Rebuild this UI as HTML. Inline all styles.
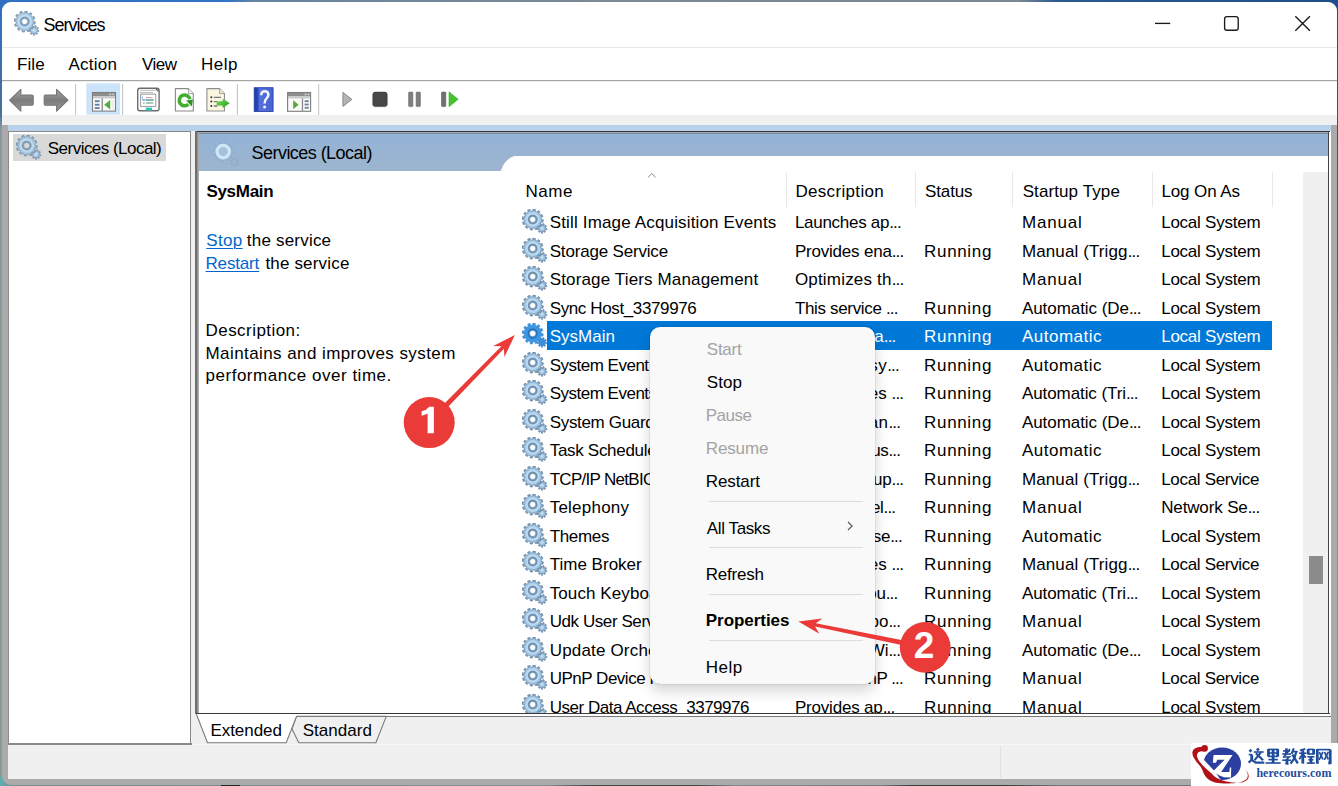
<!DOCTYPE html>
<html><head><meta charset="utf-8"><title>Services</title>
<style>
*{margin:0;padding:0;box-sizing:border-box}
html,body{width:1338px;height:786px;overflow:hidden}
body{position:relative;background:#ababab;font-family:"Liberation Sans",sans-serif;color:#000}
.a{position:absolute}
.t{position:absolute;white-space:pre;font-family:"Liberation Sans",sans-serif}
</style></head><body>
<!-- desktop edges -->
<div class="a" style="left:0;top:0;width:1338px;height:12px;background:linear-gradient(90deg,#2f70c4 0,#3374c6 17%,#66849f 19%,#7d8a96 45%,#7c8893 76%,#2b5a90 79%,#1d4f8c 100%)"></div>
<div class="a" style="left:0;top:0;width:10px;height:786px;background:linear-gradient(180deg,#2f70c4 0,#3f6fa8 10%,#4c6f98 14.5%,#8a9aa0 16.5%,#889c98 100%)"></div>
<div class="a" style="left:1330px;top:0;width:8px;height:786px;background:linear-gradient(180deg,#1d4f8c 0,#35557a 14%,#4a5f74 38%,#868e92 50%,#8a9092 100%)"></div>
<div class="a" style="left:0;top:776px;width:1338px;height:10px;background:linear-gradient(90deg,#5fb0b2 0,#7a8c8c 1.2%,#7f8e8e 41%,#454545 44%,#454545 52%,#7f8c8c 55%,#707a7a 66%,#3a3a3a 68%,#3a3a3a 75%,#6e7676 79%,#6e7676 100%)"></div><div class="a" style="left:220.5px;top:784.6px;width:19.5px;height:2px;background:#222"></div>
<!-- window -->
<div class="a" style="left:2px;top:2px;width:1335px;height:782.6px;background:#ababab;border-radius:9px 9px 9px 9px;overflow:hidden">
  <div class="a" style="left:0;top:0;width:1335px;height:113px;background:#fff"></div>
  <div class="a" style="left:0;top:45px;width:1335px;height:1px;background:#e9e9e9"></div>
  <div class="a" style="left:0;top:78.2px;width:1335px;height:1.2px;background:#a6a6a6"></div><div class="a" style="left:0;top:79.4px;width:1335px;height:1px;background:#ececec"></div>
  <div class="a" style="left:0;top:113px;width:1335px;height:10px;background:#f0f0f0"></div>
</div>
<!-- window controls -->
<svg class="a" style="left:1150px;top:10px" width="170" height="28" viewBox="1150 10 170 28" fill="none" stroke="#1b1b1b" stroke-width="1.35">
<path d="M1155 23.4 H1170.2"/>
<rect x="1224.6" y="16.6" width="13.6" height="13.6" rx="2.3"/>
<path d="M1295.3 16.2 L1309.9 30.8 M1309.9 16.2 L1295.3 30.8"/>
</svg>
<!-- client area -->
<div class="a" style="left:8px;top:125px;width:1323px;height:6px;background:#b9d1ea"></div>
<div class="a" style="left:8px;top:131px;width:1323px;height:648px;background:#f0f0f0"></div>
<!-- left tree panel -->
<div class="a" style="left:8px;top:130.5px;width:183px;height:614px;background:#fff;border:1.3px solid #8a8a8a"></div>
<div class="a" style="left:12.8px;top:134.2px;width:153.6px;height:26.4px;background:#d9d9d9"></div>
<!-- right panel -->
<div class="a" style="left:195px;top:131px;width:1134.5px;height:583px;background:#fff"></div>
<div class="a" style="left:198.5px;top:133.3px;width:1130px;height:37.7px;background:linear-gradient(180deg,#93b3d6,#98b4d2 50%,#9db4ce)"></div>
<svg class="a" style="left:498px;top:154px" width="834" height="20" viewBox="498 154 834 20"><path d="M500.3 171.3 L500.6 171.3 C503 166 505 159 514.5 156 L1328.5 156 L1328.5 172 L500.3 172 Z" fill="#fff"/></svg>
<svg class="a" style="left:208px;top:138px" width="36" height="32" viewBox="208 138 36 32"><circle cx="223.2" cy="151.6" r="6.2" fill="#a4c1dc" stroke="#cfe6f6" stroke-width="3.2"/><circle cx="223.2" cy="151.6" r="9.3" fill="none" stroke="#86a6c6" stroke-width="1.6" stroke-dasharray="2.2 2.67" opacity=".55"/><circle cx="234.5" cy="161.8" r="3.6" fill="none" stroke="#7f9fc2" stroke-width="1.5" stroke-dasharray="1.4 1.43" opacity=".7"/></svg>
<!-- right panel borders -->
<div class="a" style="left:195px;top:130.7px;width:1134.5px;height:1.4px;background:#30343a"></div>
<div class="a" style="left:197px;top:132.1px;width:1131.2px;height:1.3px;background:#a6a6a8"></div><div class="a" style="left:199px;top:133.3px;width:1129.2px;height:.8px;background:#7d8aa4"></div>
<div class="a" style="left:195px;top:130.7px;width:2px;height:583.4px;background:#6f6f6f"></div>
<div class="a" style="left:197px;top:132.1px;width:2.2px;height:580.6px;background:linear-gradient(90deg,#8a8a8a,#b4b4b4)"></div>
<div class="a" style="left:1328.2px;top:131px;width:1.3px;height:583px;background:#454545"></div>
<div class="a" style="left:1329.5px;top:131px;width:1.5px;height:586px;background:#fff"></div>
<!-- header separators -->
<div class="a" style="left:786px;top:172px;width:1px;height:35px;background:#e8e8e8"></div>
<div class="a" style="left:915px;top:172px;width:1px;height:35px;background:#e8e8e8"></div>
<div class="a" style="left:1012px;top:172px;width:1px;height:35px;background:#e8e8e8"></div>
<div class="a" style="left:1152px;top:172px;width:1px;height:35px;background:#e8e8e8"></div>
<div class="a" style="left:1272px;top:172px;width:1px;height:35px;background:#e8e8e8"></div>
<!-- sort arrow -->
<svg class="a" style="left:645px;top:170px" width="14" height="10" viewBox="0 0 14 10"><path d="M3 7.3 L6.8 3.6 L10.6 7.3" fill="none" stroke="#8a8a8a" stroke-width="1"/></svg>
<!-- scrollbar -->
<div class="a" style="left:1303.3px;top:171.6px;width:24.7px;height:541px;background:#f0f0f0"></div>
<div class="a" style="left:1308.7px;top:555.6px;width:14.2px;height:28.3px;background:#8b8b8b"></div>
<!-- selected row -->
<div class="a" style="left:546.8px;top:321.4px;width:725.4px;height:28.2px;background:#0078d7"></div>
<span class="t" style='left:43.50px;top:13.00px;font-size:18px;line-height:24px;letter-spacing:-1.017px;'>Services</span>
<span class="t" style='left:16.90px;top:53.20px;font-size:17px;line-height:23px;letter-spacing:0.154px;'>File</span>
<span class="t" style='left:68.40px;top:53.20px;font-size:17px;line-height:23px;letter-spacing:0.281px;'>Action</span>
<span class="t" style='left:141.90px;top:53.20px;font-size:17px;line-height:23px;letter-spacing:-0.454px;'>View</span>
<span class="t" style='left:201.10px;top:53.20px;font-size:17px;line-height:23px;letter-spacing:0.497px;'>Help</span>
<span class="t" style='left:47.80px;top:137.30px;font-size:17px;line-height:23px;letter-spacing:-0.527px;'>Services (Local)</span>
<span class="t" style='left:251.60px;top:141.40px;font-size:18px;line-height:24px;letter-spacing:-0.550px;'>Services (Local)</span>
<span class="t" style='left:206.40px;top:179.60px;font-size:17px;line-height:23px;letter-spacing:-0.281px;font-weight:700;'>SysMain</span>
<span class="t" style='left:206.30px;top:228.80px;font-size:17px;line-height:23px;letter-spacing:0.328px;color:#0066cc;text-decoration:underline;text-underline-offset:2px;text-decoration-thickness:1px;'>Stop</span>
<span class="t" style='left:246.80px;top:228.80px;font-size:17px;line-height:23px;letter-spacing:0.205px;'>the service</span>
<span class="t" style='left:205.50px;top:251.50px;font-size:17px;line-height:23px;letter-spacing:-0.162px;color:#0066cc;text-decoration:underline;text-underline-offset:2px;text-decoration-thickness:1px;'>Restart</span>
<span class="t" style='left:265.40px;top:251.50px;font-size:17px;line-height:23px;letter-spacing:0.175px;'>the service</span>
<span class="t" style='left:205.50px;top:318.80px;font-size:17px;line-height:23px;letter-spacing:0.452px;'>Description:</span>
<span class="t" style='left:205.50px;top:341.50px;font-size:17px;line-height:23px;letter-spacing:0.420px;'>Maintains and improves system</span>
<span class="t" style='left:205.50px;top:363.80px;font-size:17px;line-height:23px;letter-spacing:0.525px;'>performance over time.</span>
<span class="t" style='left:525.50px;top:179.50px;font-size:17px;line-height:23px;letter-spacing:0.569px;'>Name</span>
<span class="t" style='left:795.40px;top:179.50px;font-size:17px;line-height:23px;letter-spacing:0.332px;'>Description</span>
<span class="t" style='left:925.00px;top:179.50px;font-size:17px;line-height:23px;letter-spacing:-0.119px;'>Status</span>
<span class="t" style='left:1022.70px;top:179.50px;font-size:17px;line-height:23px;letter-spacing:0.097px;'>Startup Type</span>
<span class="t" style='left:1161.40px;top:179.50px;font-size:17px;line-height:23px;letter-spacing:-0.091px;'>Log On As</span>
<span class="t" style='left:549.70px;top:211.00px;font-size:17px;line-height:23px;letter-spacing:0.159px;'>Still Image Acquisition Events</span>
<span class="t" style='left:794.90px;top:211.00px;font-size:17px;line-height:23px;letter-spacing:-0.282px;'>Launches ap<span style="letter-spacing:-0.85px">...</span></span>
<span class="t" style='left:1021.90px;top:211.00px;font-size:17px;line-height:23px;letter-spacing:0.824px;'>Manual</span>
<span class="t" style='left:1161.20px;top:211.00px;font-size:17px;line-height:23px;letter-spacing:-0.244px;'>Local System</span>
<span class="t" style='left:549.70px;top:239.50px;font-size:17px;line-height:23px;letter-spacing:-0.178px;'>Storage Service</span>
<span class="t" style='left:794.90px;top:239.50px;font-size:17px;line-height:23px;letter-spacing:-0.206px;'>Provides ena<span style="letter-spacing:-0.85px">...</span></span>
<span class="t" style='left:924.10px;top:239.50px;font-size:17px;line-height:23px;letter-spacing:0.655px;'>Running</span>
<span class="t" style='left:1021.90px;top:239.50px;font-size:17px;line-height:23px;letter-spacing:0.116px;'>Manual (Trigg<span style="letter-spacing:-0.85px">...</span></span>
<span class="t" style='left:1161.20px;top:239.50px;font-size:17px;line-height:23px;letter-spacing:-0.244px;'>Local System</span>
<span class="t" style='left:549.70px;top:268.00px;font-size:17px;line-height:23px;letter-spacing:0.146px;'>Storage Tiers Management</span>
<span class="t" style='left:794.90px;top:268.00px;font-size:17px;line-height:23px;letter-spacing:0.190px;'>Optimizes th<span style="letter-spacing:-0.85px">...</span></span>
<span class="t" style='left:1021.90px;top:268.00px;font-size:17px;line-height:23px;letter-spacing:0.824px;'>Manual</span>
<span class="t" style='left:1161.20px;top:268.00px;font-size:17px;line-height:23px;letter-spacing:-0.244px;'>Local System</span>
<span class="t" style='left:549.70px;top:296.50px;font-size:17px;line-height:23px;letter-spacing:-0.378px;'>Sync Host_3379976</span>
<span class="t" style='left:794.90px;top:296.50px;font-size:17px;line-height:23px;letter-spacing:-0.335px;'>This service <span style="letter-spacing:-0.85px">...</span></span>
<span class="t" style='left:924.10px;top:296.50px;font-size:17px;line-height:23px;letter-spacing:0.655px;'>Running</span>
<span class="t" style='left:1021.90px;top:296.50px;font-size:17px;line-height:23px;letter-spacing:-0.050px;'>Automatic (De<span style="letter-spacing:-0.85px">...</span></span>
<span class="t" style='left:1161.20px;top:296.50px;font-size:17px;line-height:23px;letter-spacing:-0.244px;'>Local System</span>
<span class="t" style='left:549.70px;top:325.00px;font-size:17px;line-height:23px;letter-spacing:0.011px;color:#fff;'>SysMain</span>
<span class="t" style='left:794.90px;top:325.00px;font-size:17px;line-height:23px;letter-spacing:0.184px;color:#fff;'>Maintains a<span style="letter-spacing:-0.85px">...</span></span>
<span class="t" style='left:924.10px;top:325.00px;font-size:17px;line-height:23px;letter-spacing:0.655px;color:#fff;'>Running</span>
<span class="t" style='left:1021.90px;top:325.00px;font-size:17px;line-height:23px;letter-spacing:0.514px;color:#fff;'>Automatic</span>
<span class="t" style='left:1161.20px;top:325.00px;font-size:17px;line-height:23px;letter-spacing:-0.244px;color:#fff;'>Local System</span>
<span class="t" style='left:549.70px;top:353.50px;font-size:17px;line-height:23px;letter-spacing:-0.499px;'>System Event Notif</span>
<span class="t" style='left:794.90px;top:353.50px;font-size:17px;line-height:23px;letter-spacing:0.491px;'>Monitors sy<span style="letter-spacing:-0.85px">...</span></span>
<span class="t" style='left:924.10px;top:353.50px;font-size:17px;line-height:23px;letter-spacing:0.655px;'>Running</span>
<span class="t" style='left:1021.90px;top:353.50px;font-size:17px;line-height:23px;letter-spacing:0.514px;'>Automatic</span>
<span class="t" style='left:1161.20px;top:353.50px;font-size:17px;line-height:23px;letter-spacing:-0.244px;'>Local System</span>
<span class="t" style='left:549.70px;top:382.00px;font-size:17px;line-height:23px;letter-spacing:-0.499px;'>System Events Brok</span>
<span class="t" style='left:794.90px;top:382.00px;font-size:17px;line-height:23px;letter-spacing:0.022px;'>Coordinates <span style="letter-spacing:-0.85px">...</span></span>
<span class="t" style='left:924.10px;top:382.00px;font-size:17px;line-height:23px;letter-spacing:0.655px;'>Running</span>
<span class="t" style='left:1021.90px;top:382.00px;font-size:17px;line-height:23px;letter-spacing:-0.079px;'>Automatic (Tri<span style="letter-spacing:-0.85px">...</span></span>
<span class="t" style='left:1161.20px;top:382.00px;font-size:17px;line-height:23px;letter-spacing:-0.244px;'>Local System</span>
<span class="t" style='left:549.70px;top:410.50px;font-size:17px;line-height:23px;letter-spacing:-0.323px;'>System Guard Runt</span>
<span class="t" style='left:794.90px;top:410.50px;font-size:17px;line-height:23px;letter-spacing:0.430px;'>Monitors an<span style="letter-spacing:-0.85px">...</span></span>
<span class="t" style='left:924.10px;top:410.50px;font-size:17px;line-height:23px;letter-spacing:0.655px;'>Running</span>
<span class="t" style='left:1021.90px;top:410.50px;font-size:17px;line-height:23px;letter-spacing:-0.050px;'>Automatic (De<span style="letter-spacing:-0.85px">...</span></span>
<span class="t" style='left:1161.20px;top:410.50px;font-size:17px;line-height:23px;letter-spacing:-0.244px;'>Local System</span>
<span class="t" style='left:549.70px;top:439.00px;font-size:17px;line-height:23px;letter-spacing:-0.303px;'>Task Scheduler</span>
<span class="t" style='left:794.90px;top:439.00px;font-size:17px;line-height:23px;letter-spacing:-0.395px;'>Enables a us<span style="letter-spacing:-0.85px">...</span></span>
<span class="t" style='left:924.10px;top:439.00px;font-size:17px;line-height:23px;letter-spacing:0.655px;'>Running</span>
<span class="t" style='left:1021.90px;top:439.00px;font-size:17px;line-height:23px;letter-spacing:0.514px;'>Automatic</span>
<span class="t" style='left:1161.20px;top:439.00px;font-size:17px;line-height:23px;letter-spacing:-0.244px;'>Local System</span>
<span class="t" style='left:549.70px;top:467.50px;font-size:17px;line-height:23px;letter-spacing:-0.709px;'>TCP/IP NetBIOS Helper</span>
<span class="t" style='left:794.90px;top:467.50px;font-size:17px;line-height:23px;letter-spacing:-0.135px;'>Provides sup<span style="letter-spacing:-0.85px">...</span></span>
<span class="t" style='left:924.10px;top:467.50px;font-size:17px;line-height:23px;letter-spacing:0.655px;'>Running</span>
<span class="t" style='left:1021.90px;top:467.50px;font-size:17px;line-height:23px;letter-spacing:0.116px;'>Manual (Trigg<span style="letter-spacing:-0.85px">...</span></span>
<span class="t" style='left:1161.20px;top:467.50px;font-size:17px;line-height:23px;letter-spacing:-0.316px;'>Local Service</span>
<span class="t" style='left:549.70px;top:496.00px;font-size:17px;line-height:23px;letter-spacing:0.224px;'>Telephony</span>
<span class="t" style='left:794.90px;top:496.00px;font-size:17px;line-height:23px;letter-spacing:-0.303px;'>Provides Tel<span style="letter-spacing:-0.85px">...</span></span>
<span class="t" style='left:924.10px;top:496.00px;font-size:17px;line-height:23px;letter-spacing:0.655px;'>Running</span>
<span class="t" style='left:1021.90px;top:496.00px;font-size:17px;line-height:23px;letter-spacing:0.824px;'>Manual</span>
<span class="t" style='left:1161.20px;top:496.00px;font-size:17px;line-height:23px;letter-spacing:-0.141px;'>Network Se<span style="letter-spacing:-0.85px">...</span></span>
<span class="t" style='left:549.70px;top:524.50px;font-size:17px;line-height:23px;letter-spacing:-0.342px;'>Themes</span>
<span class="t" style='left:794.90px;top:524.50px;font-size:17px;line-height:23px;letter-spacing:-0.243px;'>Provides use<span style="letter-spacing:-0.85px">...</span></span>
<span class="t" style='left:924.10px;top:524.50px;font-size:17px;line-height:23px;letter-spacing:0.655px;'>Running</span>
<span class="t" style='left:1021.90px;top:524.50px;font-size:17px;line-height:23px;letter-spacing:0.514px;'>Automatic</span>
<span class="t" style='left:1161.20px;top:524.50px;font-size:17px;line-height:23px;letter-spacing:-0.244px;'>Local System</span>
<span class="t" style='left:549.70px;top:553.00px;font-size:17px;line-height:23px;letter-spacing:0.012px;'>Time Broker</span>
<span class="t" style='left:794.90px;top:553.00px;font-size:17px;line-height:23px;letter-spacing:0.022px;'>Coordinates <span style="letter-spacing:-0.85px">...</span></span>
<span class="t" style='left:924.10px;top:553.00px;font-size:17px;line-height:23px;letter-spacing:0.655px;'>Running</span>
<span class="t" style='left:1021.90px;top:553.00px;font-size:17px;line-height:23px;letter-spacing:0.116px;'>Manual (Trigg<span style="letter-spacing:-0.85px">...</span></span>
<span class="t" style='left:1161.20px;top:553.00px;font-size:17px;line-height:23px;letter-spacing:-0.316px;'>Local Service</span>
<span class="t" style='left:549.70px;top:581.50px;font-size:17px;line-height:23px;letter-spacing:0.097px;'>Touch Keyboard and</span>
<span class="t" style='left:794.90px;top:581.50px;font-size:17px;line-height:23px;letter-spacing:-0.228px;'>Enables Tou<span style="letter-spacing:-0.85px">...</span></span>
<span class="t" style='left:924.10px;top:581.50px;font-size:17px;line-height:23px;letter-spacing:0.655px;'>Running</span>
<span class="t" style='left:1021.90px;top:581.50px;font-size:17px;line-height:23px;letter-spacing:-0.079px;'>Automatic (Tri<span style="letter-spacing:-0.85px">...</span></span>
<span class="t" style='left:1161.20px;top:581.50px;font-size:17px;line-height:23px;letter-spacing:-0.244px;'>Local System</span>
<span class="t" style='left:549.70px;top:610.00px;font-size:17px;line-height:23px;letter-spacing:-0.424px;'>Udk User Service_33</span>
<span class="t" style='left:794.90px;top:610.00px;font-size:17px;line-height:23px;'>Shell compo<span style="letter-spacing:-0.85px">...</span></span>
<span class="t" style='left:924.10px;top:610.00px;font-size:17px;line-height:23px;letter-spacing:0.655px;'>Running</span>
<span class="t" style='left:1021.90px;top:610.00px;font-size:17px;line-height:23px;letter-spacing:0.824px;'>Manual</span>
<span class="t" style='left:1161.20px;top:610.00px;font-size:17px;line-height:23px;letter-spacing:-0.244px;'>Local System</span>
<span class="t" style='left:549.70px;top:638.50px;font-size:17px;line-height:23px;letter-spacing:0.177px;'>Update Orchestrator</span>
<span class="t" style='left:794.90px;top:638.50px;font-size:17px;line-height:23px;letter-spacing:-0.093px;'>Manages Wi<span style="letter-spacing:-0.85px">...</span></span>
<span class="t" style='left:924.10px;top:638.50px;font-size:17px;line-height:23px;letter-spacing:0.655px;'>Running</span>
<span class="t" style='left:1021.90px;top:638.50px;font-size:17px;line-height:23px;letter-spacing:-0.050px;'>Automatic (De<span style="letter-spacing:-0.85px">...</span></span>
<span class="t" style='left:1161.20px;top:638.50px;font-size:17px;line-height:23px;letter-spacing:-0.244px;'>Local System</span>
<span class="t" style='left:549.70px;top:667.00px;font-size:17px;line-height:23px;letter-spacing:-0.484px;'>UPnP Device Host</span>
<span class="t" style='left:794.90px;top:667.00px;font-size:17px;line-height:23px;letter-spacing:-0.527px;'>Allows UPnP <span style="letter-spacing:-0.85px">...</span></span>
<span class="t" style='left:924.10px;top:667.00px;font-size:17px;line-height:23px;letter-spacing:0.655px;'>Running</span>
<span class="t" style='left:1021.90px;top:667.00px;font-size:17px;line-height:23px;letter-spacing:0.824px;'>Manual</span>
<span class="t" style='left:1161.20px;top:667.00px;font-size:17px;line-height:23px;letter-spacing:-0.316px;'>Local Service</span>
<span class="t" style='left:549.70px;top:695.50px;font-size:17px;line-height:23px;letter-spacing:-0.475px;'>User Data Access_3379976</span>
<span class="t" style='left:794.90px;top:695.50px;font-size:17px;line-height:23px;letter-spacing:-0.184px;'>Provides ap<span style="letter-spacing:-0.85px">...</span></span>
<span class="t" style='left:924.10px;top:695.50px;font-size:17px;line-height:23px;letter-spacing:0.655px;'>Running</span>
<span class="t" style='left:1021.90px;top:695.50px;font-size:17px;line-height:23px;letter-spacing:0.824px;'>Manual</span>
<span class="t" style='left:1161.20px;top:695.50px;font-size:17px;line-height:23px;letter-spacing:-0.244px;'>Local System</span>
<svg width="0" height="0" style="position:absolute"><defs>
<radialGradient id="gg" cx="10.7" cy="10.5" r="10.5" gradientUnits="userSpaceOnUse"><stop offset="0" stop-color="#6a8db0"/><stop offset=".42" stop-color="#6f93b6"/><stop offset=".52" stop-color="#c4e0f5"/><stop offset=".78" stop-color="#9cc1e0"/><stop offset="1" stop-color="#6a8aaa"/></radialGradient>
<radialGradient id="gs" cx="20" cy="19.3" r="4.8" gradientUnits="userSpaceOnUse"><stop offset="0" stop-color="#cfe8f9"/><stop offset=".5" stop-color="#9dc1df"/><stop offset="1" stop-color="#6d8eae"/></radialGradient>
</defs></svg>
<svg class="a" style="left:522px;top:209.0px" width="26" height="26" viewBox="0 0 26 26"><path d="M23.5 19.2 L24.9 19.5 L24.7 20.8 L23.2 20.6 L22.8 21.5 L23.6 22.6 L22.6 23.4 L21.6 22.4 L20.7 22.7 L20.7 24.2 L19.3 24.2 L19.3 22.7 L18.4 22.4 L17.4 23.4 L16.4 22.6 L17.2 21.5 L16.8 20.6 L15.3 20.8 L15.1 19.5 L16.5 19.2 L16.7 18.2 L15.5 17.4 L16.1 16.3 L17.4 17.0 L18.1 16.3 L17.7 15.0 L19.0 14.5 L19.5 15.8 L20.5 15.8 L21.0 14.5 L22.3 15.0 L21.9 16.3 L22.6 17.0 L23.9 16.3 L24.5 17.4 L23.3 18.2 Z" fill="url(#gs)" stroke="#6582a0" stroke-width=".7"/><path d="M19.2 10.3 L21.3 10.8 L21.0 13.2 L18.8 13.0 L18.2 14.6 L19.7 16.0 L18.3 17.9 L16.5 16.7 L15.1 17.8 L15.8 19.8 L13.5 20.7 L12.6 18.8 L10.9 19.0 L10.4 21.1 L8.0 20.8 L8.2 18.6 L6.6 18.0 L5.2 19.5 L3.3 18.1 L4.5 16.3 L3.4 14.9 L1.4 15.6 L0.5 13.3 L2.4 12.4 L2.2 10.7 L0.1 10.2 L0.4 7.8 L2.6 8.0 L3.2 6.4 L1.7 5.0 L3.1 3.1 L4.9 4.3 L6.3 3.2 L5.6 1.2 L7.9 0.3 L8.8 2.2 L10.5 2.0 L11.0 -0.1 L13.4 0.2 L13.2 2.4 L14.8 3.0 L16.2 1.5 L18.1 2.9 L16.9 4.7 L18.0 6.1 L20.0 5.4 L20.9 7.7 L19.0 8.6 Z M7.60 10.50 a3.10 3.10 0 1 0 6.20 0 a3.10 3.10 0 1 0 -6.20 0 Z" fill="url(#gg)" fill-rule="evenodd" stroke="#6886a4" stroke-width=".7"/></svg>
<svg class="a" style="left:522px;top:237.5px" width="26" height="26" viewBox="0 0 26 26"><path d="M23.5 19.2 L24.9 19.5 L24.7 20.8 L23.2 20.6 L22.8 21.5 L23.6 22.6 L22.6 23.4 L21.6 22.4 L20.7 22.7 L20.7 24.2 L19.3 24.2 L19.3 22.7 L18.4 22.4 L17.4 23.4 L16.4 22.6 L17.2 21.5 L16.8 20.6 L15.3 20.8 L15.1 19.5 L16.5 19.2 L16.7 18.2 L15.5 17.4 L16.1 16.3 L17.4 17.0 L18.1 16.3 L17.7 15.0 L19.0 14.5 L19.5 15.8 L20.5 15.8 L21.0 14.5 L22.3 15.0 L21.9 16.3 L22.6 17.0 L23.9 16.3 L24.5 17.4 L23.3 18.2 Z" fill="url(#gs)" stroke="#6582a0" stroke-width=".7"/><path d="M19.2 10.3 L21.3 10.8 L21.0 13.2 L18.8 13.0 L18.2 14.6 L19.7 16.0 L18.3 17.9 L16.5 16.7 L15.1 17.8 L15.8 19.8 L13.5 20.7 L12.6 18.8 L10.9 19.0 L10.4 21.1 L8.0 20.8 L8.2 18.6 L6.6 18.0 L5.2 19.5 L3.3 18.1 L4.5 16.3 L3.4 14.9 L1.4 15.6 L0.5 13.3 L2.4 12.4 L2.2 10.7 L0.1 10.2 L0.4 7.8 L2.6 8.0 L3.2 6.4 L1.7 5.0 L3.1 3.1 L4.9 4.3 L6.3 3.2 L5.6 1.2 L7.9 0.3 L8.8 2.2 L10.5 2.0 L11.0 -0.1 L13.4 0.2 L13.2 2.4 L14.8 3.0 L16.2 1.5 L18.1 2.9 L16.9 4.7 L18.0 6.1 L20.0 5.4 L20.9 7.7 L19.0 8.6 Z M7.60 10.50 a3.10 3.10 0 1 0 6.20 0 a3.10 3.10 0 1 0 -6.20 0 Z" fill="url(#gg)" fill-rule="evenodd" stroke="#6886a4" stroke-width=".7"/></svg>
<svg class="a" style="left:522px;top:266.0px" width="26" height="26" viewBox="0 0 26 26"><path d="M23.5 19.2 L24.9 19.5 L24.7 20.8 L23.2 20.6 L22.8 21.5 L23.6 22.6 L22.6 23.4 L21.6 22.4 L20.7 22.7 L20.7 24.2 L19.3 24.2 L19.3 22.7 L18.4 22.4 L17.4 23.4 L16.4 22.6 L17.2 21.5 L16.8 20.6 L15.3 20.8 L15.1 19.5 L16.5 19.2 L16.7 18.2 L15.5 17.4 L16.1 16.3 L17.4 17.0 L18.1 16.3 L17.7 15.0 L19.0 14.5 L19.5 15.8 L20.5 15.8 L21.0 14.5 L22.3 15.0 L21.9 16.3 L22.6 17.0 L23.9 16.3 L24.5 17.4 L23.3 18.2 Z" fill="url(#gs)" stroke="#6582a0" stroke-width=".7"/><path d="M19.2 10.3 L21.3 10.8 L21.0 13.2 L18.8 13.0 L18.2 14.6 L19.7 16.0 L18.3 17.9 L16.5 16.7 L15.1 17.8 L15.8 19.8 L13.5 20.7 L12.6 18.8 L10.9 19.0 L10.4 21.1 L8.0 20.8 L8.2 18.6 L6.6 18.0 L5.2 19.5 L3.3 18.1 L4.5 16.3 L3.4 14.9 L1.4 15.6 L0.5 13.3 L2.4 12.4 L2.2 10.7 L0.1 10.2 L0.4 7.8 L2.6 8.0 L3.2 6.4 L1.7 5.0 L3.1 3.1 L4.9 4.3 L6.3 3.2 L5.6 1.2 L7.9 0.3 L8.8 2.2 L10.5 2.0 L11.0 -0.1 L13.4 0.2 L13.2 2.4 L14.8 3.0 L16.2 1.5 L18.1 2.9 L16.9 4.7 L18.0 6.1 L20.0 5.4 L20.9 7.7 L19.0 8.6 Z M7.60 10.50 a3.10 3.10 0 1 0 6.20 0 a3.10 3.10 0 1 0 -6.20 0 Z" fill="url(#gg)" fill-rule="evenodd" stroke="#6886a4" stroke-width=".7"/></svg>
<svg class="a" style="left:522px;top:294.5px" width="26" height="26" viewBox="0 0 26 26"><path d="M23.5 19.2 L24.9 19.5 L24.7 20.8 L23.2 20.6 L22.8 21.5 L23.6 22.6 L22.6 23.4 L21.6 22.4 L20.7 22.7 L20.7 24.2 L19.3 24.2 L19.3 22.7 L18.4 22.4 L17.4 23.4 L16.4 22.6 L17.2 21.5 L16.8 20.6 L15.3 20.8 L15.1 19.5 L16.5 19.2 L16.7 18.2 L15.5 17.4 L16.1 16.3 L17.4 17.0 L18.1 16.3 L17.7 15.0 L19.0 14.5 L19.5 15.8 L20.5 15.8 L21.0 14.5 L22.3 15.0 L21.9 16.3 L22.6 17.0 L23.9 16.3 L24.5 17.4 L23.3 18.2 Z" fill="url(#gs)" stroke="#6582a0" stroke-width=".7"/><path d="M19.2 10.3 L21.3 10.8 L21.0 13.2 L18.8 13.0 L18.2 14.6 L19.7 16.0 L18.3 17.9 L16.5 16.7 L15.1 17.8 L15.8 19.8 L13.5 20.7 L12.6 18.8 L10.9 19.0 L10.4 21.1 L8.0 20.8 L8.2 18.6 L6.6 18.0 L5.2 19.5 L3.3 18.1 L4.5 16.3 L3.4 14.9 L1.4 15.6 L0.5 13.3 L2.4 12.4 L2.2 10.7 L0.1 10.2 L0.4 7.8 L2.6 8.0 L3.2 6.4 L1.7 5.0 L3.1 3.1 L4.9 4.3 L6.3 3.2 L5.6 1.2 L7.9 0.3 L8.8 2.2 L10.5 2.0 L11.0 -0.1 L13.4 0.2 L13.2 2.4 L14.8 3.0 L16.2 1.5 L18.1 2.9 L16.9 4.7 L18.0 6.1 L20.0 5.4 L20.9 7.7 L19.0 8.6 Z M7.60 10.50 a3.10 3.10 0 1 0 6.20 0 a3.10 3.10 0 1 0 -6.20 0 Z" fill="url(#gg)" fill-rule="evenodd" stroke="#6886a4" stroke-width=".7"/></svg>
<svg class="a" style="left:522px;top:323.0px" width="26" height="26" viewBox="0 0 26 26"><path d="M23.5 19.2 L24.9 19.5 L24.7 20.8 L23.2 20.6 L22.8 21.5 L23.6 22.6 L22.6 23.4 L21.6 22.4 L20.7 22.7 L20.7 24.2 L19.3 24.2 L19.3 22.7 L18.4 22.4 L17.4 23.4 L16.4 22.6 L17.2 21.5 L16.8 20.6 L15.3 20.8 L15.1 19.5 L16.5 19.2 L16.7 18.2 L15.5 17.4 L16.1 16.3 L17.4 17.0 L18.1 16.3 L17.7 15.0 L19.0 14.5 L19.5 15.8 L20.5 15.8 L21.0 14.5 L22.3 15.0 L21.9 16.3 L22.6 17.0 L23.9 16.3 L24.5 17.4 L23.3 18.2 Z" fill="#3d8fd8" stroke="#2c7bc4" stroke-width=".5"/><path d="M19.2 10.3 L21.3 10.8 L21.0 13.2 L18.8 13.0 L18.2 14.6 L19.7 16.0 L18.3 17.9 L16.5 16.7 L15.1 17.8 L15.8 19.8 L13.5 20.7 L12.6 18.8 L10.9 19.0 L10.4 21.1 L8.0 20.8 L8.2 18.6 L6.6 18.0 L5.2 19.5 L3.3 18.1 L4.5 16.3 L3.4 14.9 L1.4 15.6 L0.5 13.3 L2.4 12.4 L2.2 10.7 L0.1 10.2 L0.4 7.8 L2.6 8.0 L3.2 6.4 L1.7 5.0 L3.1 3.1 L4.9 4.3 L6.3 3.2 L5.6 1.2 L7.9 0.3 L8.8 2.2 L10.5 2.0 L11.0 -0.1 L13.4 0.2 L13.2 2.4 L14.8 3.0 L16.2 1.5 L18.1 2.9 L16.9 4.7 L18.0 6.1 L20.0 5.4 L20.9 7.7 L19.0 8.6 Z M7.60 10.50 a3.10 3.10 0 1 0 6.20 0 a3.10 3.10 0 1 0 -6.20 0 Z" fill="#3f97e3" fill-rule="evenodd" stroke="#2f80cc" stroke-width=".5"/><circle cx="10.7" cy="10.5" r="4.4" fill="none" stroke="#2a74ba" stroke-width="1.6"/></svg>
<svg class="a" style="left:522px;top:351.5px" width="26" height="26" viewBox="0 0 26 26"><path d="M23.5 19.2 L24.9 19.5 L24.7 20.8 L23.2 20.6 L22.8 21.5 L23.6 22.6 L22.6 23.4 L21.6 22.4 L20.7 22.7 L20.7 24.2 L19.3 24.2 L19.3 22.7 L18.4 22.4 L17.4 23.4 L16.4 22.6 L17.2 21.5 L16.8 20.6 L15.3 20.8 L15.1 19.5 L16.5 19.2 L16.7 18.2 L15.5 17.4 L16.1 16.3 L17.4 17.0 L18.1 16.3 L17.7 15.0 L19.0 14.5 L19.5 15.8 L20.5 15.8 L21.0 14.5 L22.3 15.0 L21.9 16.3 L22.6 17.0 L23.9 16.3 L24.5 17.4 L23.3 18.2 Z" fill="url(#gs)" stroke="#6582a0" stroke-width=".7"/><path d="M19.2 10.3 L21.3 10.8 L21.0 13.2 L18.8 13.0 L18.2 14.6 L19.7 16.0 L18.3 17.9 L16.5 16.7 L15.1 17.8 L15.8 19.8 L13.5 20.7 L12.6 18.8 L10.9 19.0 L10.4 21.1 L8.0 20.8 L8.2 18.6 L6.6 18.0 L5.2 19.5 L3.3 18.1 L4.5 16.3 L3.4 14.9 L1.4 15.6 L0.5 13.3 L2.4 12.4 L2.2 10.7 L0.1 10.2 L0.4 7.8 L2.6 8.0 L3.2 6.4 L1.7 5.0 L3.1 3.1 L4.9 4.3 L6.3 3.2 L5.6 1.2 L7.9 0.3 L8.8 2.2 L10.5 2.0 L11.0 -0.1 L13.4 0.2 L13.2 2.4 L14.8 3.0 L16.2 1.5 L18.1 2.9 L16.9 4.7 L18.0 6.1 L20.0 5.4 L20.9 7.7 L19.0 8.6 Z M7.60 10.50 a3.10 3.10 0 1 0 6.20 0 a3.10 3.10 0 1 0 -6.20 0 Z" fill="url(#gg)" fill-rule="evenodd" stroke="#6886a4" stroke-width=".7"/></svg>
<svg class="a" style="left:522px;top:380.0px" width="26" height="26" viewBox="0 0 26 26"><path d="M23.5 19.2 L24.9 19.5 L24.7 20.8 L23.2 20.6 L22.8 21.5 L23.6 22.6 L22.6 23.4 L21.6 22.4 L20.7 22.7 L20.7 24.2 L19.3 24.2 L19.3 22.7 L18.4 22.4 L17.4 23.4 L16.4 22.6 L17.2 21.5 L16.8 20.6 L15.3 20.8 L15.1 19.5 L16.5 19.2 L16.7 18.2 L15.5 17.4 L16.1 16.3 L17.4 17.0 L18.1 16.3 L17.7 15.0 L19.0 14.5 L19.5 15.8 L20.5 15.8 L21.0 14.5 L22.3 15.0 L21.9 16.3 L22.6 17.0 L23.9 16.3 L24.5 17.4 L23.3 18.2 Z" fill="url(#gs)" stroke="#6582a0" stroke-width=".7"/><path d="M19.2 10.3 L21.3 10.8 L21.0 13.2 L18.8 13.0 L18.2 14.6 L19.7 16.0 L18.3 17.9 L16.5 16.7 L15.1 17.8 L15.8 19.8 L13.5 20.7 L12.6 18.8 L10.9 19.0 L10.4 21.1 L8.0 20.8 L8.2 18.6 L6.6 18.0 L5.2 19.5 L3.3 18.1 L4.5 16.3 L3.4 14.9 L1.4 15.6 L0.5 13.3 L2.4 12.4 L2.2 10.7 L0.1 10.2 L0.4 7.8 L2.6 8.0 L3.2 6.4 L1.7 5.0 L3.1 3.1 L4.9 4.3 L6.3 3.2 L5.6 1.2 L7.9 0.3 L8.8 2.2 L10.5 2.0 L11.0 -0.1 L13.4 0.2 L13.2 2.4 L14.8 3.0 L16.2 1.5 L18.1 2.9 L16.9 4.7 L18.0 6.1 L20.0 5.4 L20.9 7.7 L19.0 8.6 Z M7.60 10.50 a3.10 3.10 0 1 0 6.20 0 a3.10 3.10 0 1 0 -6.20 0 Z" fill="url(#gg)" fill-rule="evenodd" stroke="#6886a4" stroke-width=".7"/></svg>
<svg class="a" style="left:522px;top:408.5px" width="26" height="26" viewBox="0 0 26 26"><path d="M23.5 19.2 L24.9 19.5 L24.7 20.8 L23.2 20.6 L22.8 21.5 L23.6 22.6 L22.6 23.4 L21.6 22.4 L20.7 22.7 L20.7 24.2 L19.3 24.2 L19.3 22.7 L18.4 22.4 L17.4 23.4 L16.4 22.6 L17.2 21.5 L16.8 20.6 L15.3 20.8 L15.1 19.5 L16.5 19.2 L16.7 18.2 L15.5 17.4 L16.1 16.3 L17.4 17.0 L18.1 16.3 L17.7 15.0 L19.0 14.5 L19.5 15.8 L20.5 15.8 L21.0 14.5 L22.3 15.0 L21.9 16.3 L22.6 17.0 L23.9 16.3 L24.5 17.4 L23.3 18.2 Z" fill="url(#gs)" stroke="#6582a0" stroke-width=".7"/><path d="M19.2 10.3 L21.3 10.8 L21.0 13.2 L18.8 13.0 L18.2 14.6 L19.7 16.0 L18.3 17.9 L16.5 16.7 L15.1 17.8 L15.8 19.8 L13.5 20.7 L12.6 18.8 L10.9 19.0 L10.4 21.1 L8.0 20.8 L8.2 18.6 L6.6 18.0 L5.2 19.5 L3.3 18.1 L4.5 16.3 L3.4 14.9 L1.4 15.6 L0.5 13.3 L2.4 12.4 L2.2 10.7 L0.1 10.2 L0.4 7.8 L2.6 8.0 L3.2 6.4 L1.7 5.0 L3.1 3.1 L4.9 4.3 L6.3 3.2 L5.6 1.2 L7.9 0.3 L8.8 2.2 L10.5 2.0 L11.0 -0.1 L13.4 0.2 L13.2 2.4 L14.8 3.0 L16.2 1.5 L18.1 2.9 L16.9 4.7 L18.0 6.1 L20.0 5.4 L20.9 7.7 L19.0 8.6 Z M7.60 10.50 a3.10 3.10 0 1 0 6.20 0 a3.10 3.10 0 1 0 -6.20 0 Z" fill="url(#gg)" fill-rule="evenodd" stroke="#6886a4" stroke-width=".7"/></svg>
<svg class="a" style="left:522px;top:437.0px" width="26" height="26" viewBox="0 0 26 26"><path d="M23.5 19.2 L24.9 19.5 L24.7 20.8 L23.2 20.6 L22.8 21.5 L23.6 22.6 L22.6 23.4 L21.6 22.4 L20.7 22.7 L20.7 24.2 L19.3 24.2 L19.3 22.7 L18.4 22.4 L17.4 23.4 L16.4 22.6 L17.2 21.5 L16.8 20.6 L15.3 20.8 L15.1 19.5 L16.5 19.2 L16.7 18.2 L15.5 17.4 L16.1 16.3 L17.4 17.0 L18.1 16.3 L17.7 15.0 L19.0 14.5 L19.5 15.8 L20.5 15.8 L21.0 14.5 L22.3 15.0 L21.9 16.3 L22.6 17.0 L23.9 16.3 L24.5 17.4 L23.3 18.2 Z" fill="url(#gs)" stroke="#6582a0" stroke-width=".7"/><path d="M19.2 10.3 L21.3 10.8 L21.0 13.2 L18.8 13.0 L18.2 14.6 L19.7 16.0 L18.3 17.9 L16.5 16.7 L15.1 17.8 L15.8 19.8 L13.5 20.7 L12.6 18.8 L10.9 19.0 L10.4 21.1 L8.0 20.8 L8.2 18.6 L6.6 18.0 L5.2 19.5 L3.3 18.1 L4.5 16.3 L3.4 14.9 L1.4 15.6 L0.5 13.3 L2.4 12.4 L2.2 10.7 L0.1 10.2 L0.4 7.8 L2.6 8.0 L3.2 6.4 L1.7 5.0 L3.1 3.1 L4.9 4.3 L6.3 3.2 L5.6 1.2 L7.9 0.3 L8.8 2.2 L10.5 2.0 L11.0 -0.1 L13.4 0.2 L13.2 2.4 L14.8 3.0 L16.2 1.5 L18.1 2.9 L16.9 4.7 L18.0 6.1 L20.0 5.4 L20.9 7.7 L19.0 8.6 Z M7.60 10.50 a3.10 3.10 0 1 0 6.20 0 a3.10 3.10 0 1 0 -6.20 0 Z" fill="url(#gg)" fill-rule="evenodd" stroke="#6886a4" stroke-width=".7"/></svg>
<svg class="a" style="left:522px;top:465.5px" width="26" height="26" viewBox="0 0 26 26"><path d="M23.5 19.2 L24.9 19.5 L24.7 20.8 L23.2 20.6 L22.8 21.5 L23.6 22.6 L22.6 23.4 L21.6 22.4 L20.7 22.7 L20.7 24.2 L19.3 24.2 L19.3 22.7 L18.4 22.4 L17.4 23.4 L16.4 22.6 L17.2 21.5 L16.8 20.6 L15.3 20.8 L15.1 19.5 L16.5 19.2 L16.7 18.2 L15.5 17.4 L16.1 16.3 L17.4 17.0 L18.1 16.3 L17.7 15.0 L19.0 14.5 L19.5 15.8 L20.5 15.8 L21.0 14.5 L22.3 15.0 L21.9 16.3 L22.6 17.0 L23.9 16.3 L24.5 17.4 L23.3 18.2 Z" fill="url(#gs)" stroke="#6582a0" stroke-width=".7"/><path d="M19.2 10.3 L21.3 10.8 L21.0 13.2 L18.8 13.0 L18.2 14.6 L19.7 16.0 L18.3 17.9 L16.5 16.7 L15.1 17.8 L15.8 19.8 L13.5 20.7 L12.6 18.8 L10.9 19.0 L10.4 21.1 L8.0 20.8 L8.2 18.6 L6.6 18.0 L5.2 19.5 L3.3 18.1 L4.5 16.3 L3.4 14.9 L1.4 15.6 L0.5 13.3 L2.4 12.4 L2.2 10.7 L0.1 10.2 L0.4 7.8 L2.6 8.0 L3.2 6.4 L1.7 5.0 L3.1 3.1 L4.9 4.3 L6.3 3.2 L5.6 1.2 L7.9 0.3 L8.8 2.2 L10.5 2.0 L11.0 -0.1 L13.4 0.2 L13.2 2.4 L14.8 3.0 L16.2 1.5 L18.1 2.9 L16.9 4.7 L18.0 6.1 L20.0 5.4 L20.9 7.7 L19.0 8.6 Z M7.60 10.50 a3.10 3.10 0 1 0 6.20 0 a3.10 3.10 0 1 0 -6.20 0 Z" fill="url(#gg)" fill-rule="evenodd" stroke="#6886a4" stroke-width=".7"/></svg>
<svg class="a" style="left:522px;top:494.0px" width="26" height="26" viewBox="0 0 26 26"><path d="M23.5 19.2 L24.9 19.5 L24.7 20.8 L23.2 20.6 L22.8 21.5 L23.6 22.6 L22.6 23.4 L21.6 22.4 L20.7 22.7 L20.7 24.2 L19.3 24.2 L19.3 22.7 L18.4 22.4 L17.4 23.4 L16.4 22.6 L17.2 21.5 L16.8 20.6 L15.3 20.8 L15.1 19.5 L16.5 19.2 L16.7 18.2 L15.5 17.4 L16.1 16.3 L17.4 17.0 L18.1 16.3 L17.7 15.0 L19.0 14.5 L19.5 15.8 L20.5 15.8 L21.0 14.5 L22.3 15.0 L21.9 16.3 L22.6 17.0 L23.9 16.3 L24.5 17.4 L23.3 18.2 Z" fill="url(#gs)" stroke="#6582a0" stroke-width=".7"/><path d="M19.2 10.3 L21.3 10.8 L21.0 13.2 L18.8 13.0 L18.2 14.6 L19.7 16.0 L18.3 17.9 L16.5 16.7 L15.1 17.8 L15.8 19.8 L13.5 20.7 L12.6 18.8 L10.9 19.0 L10.4 21.1 L8.0 20.8 L8.2 18.6 L6.6 18.0 L5.2 19.5 L3.3 18.1 L4.5 16.3 L3.4 14.9 L1.4 15.6 L0.5 13.3 L2.4 12.4 L2.2 10.7 L0.1 10.2 L0.4 7.8 L2.6 8.0 L3.2 6.4 L1.7 5.0 L3.1 3.1 L4.9 4.3 L6.3 3.2 L5.6 1.2 L7.9 0.3 L8.8 2.2 L10.5 2.0 L11.0 -0.1 L13.4 0.2 L13.2 2.4 L14.8 3.0 L16.2 1.5 L18.1 2.9 L16.9 4.7 L18.0 6.1 L20.0 5.4 L20.9 7.7 L19.0 8.6 Z M7.60 10.50 a3.10 3.10 0 1 0 6.20 0 a3.10 3.10 0 1 0 -6.20 0 Z" fill="url(#gg)" fill-rule="evenodd" stroke="#6886a4" stroke-width=".7"/></svg>
<svg class="a" style="left:522px;top:522.5px" width="26" height="26" viewBox="0 0 26 26"><path d="M23.5 19.2 L24.9 19.5 L24.7 20.8 L23.2 20.6 L22.8 21.5 L23.6 22.6 L22.6 23.4 L21.6 22.4 L20.7 22.7 L20.7 24.2 L19.3 24.2 L19.3 22.7 L18.4 22.4 L17.4 23.4 L16.4 22.6 L17.2 21.5 L16.8 20.6 L15.3 20.8 L15.1 19.5 L16.5 19.2 L16.7 18.2 L15.5 17.4 L16.1 16.3 L17.4 17.0 L18.1 16.3 L17.7 15.0 L19.0 14.5 L19.5 15.8 L20.5 15.8 L21.0 14.5 L22.3 15.0 L21.9 16.3 L22.6 17.0 L23.9 16.3 L24.5 17.4 L23.3 18.2 Z" fill="url(#gs)" stroke="#6582a0" stroke-width=".7"/><path d="M19.2 10.3 L21.3 10.8 L21.0 13.2 L18.8 13.0 L18.2 14.6 L19.7 16.0 L18.3 17.9 L16.5 16.7 L15.1 17.8 L15.8 19.8 L13.5 20.7 L12.6 18.8 L10.9 19.0 L10.4 21.1 L8.0 20.8 L8.2 18.6 L6.6 18.0 L5.2 19.5 L3.3 18.1 L4.5 16.3 L3.4 14.9 L1.4 15.6 L0.5 13.3 L2.4 12.4 L2.2 10.7 L0.1 10.2 L0.4 7.8 L2.6 8.0 L3.2 6.4 L1.7 5.0 L3.1 3.1 L4.9 4.3 L6.3 3.2 L5.6 1.2 L7.9 0.3 L8.8 2.2 L10.5 2.0 L11.0 -0.1 L13.4 0.2 L13.2 2.4 L14.8 3.0 L16.2 1.5 L18.1 2.9 L16.9 4.7 L18.0 6.1 L20.0 5.4 L20.9 7.7 L19.0 8.6 Z M7.60 10.50 a3.10 3.10 0 1 0 6.20 0 a3.10 3.10 0 1 0 -6.20 0 Z" fill="url(#gg)" fill-rule="evenodd" stroke="#6886a4" stroke-width=".7"/></svg>
<svg class="a" style="left:522px;top:551.0px" width="26" height="26" viewBox="0 0 26 26"><path d="M23.5 19.2 L24.9 19.5 L24.7 20.8 L23.2 20.6 L22.8 21.5 L23.6 22.6 L22.6 23.4 L21.6 22.4 L20.7 22.7 L20.7 24.2 L19.3 24.2 L19.3 22.7 L18.4 22.4 L17.4 23.4 L16.4 22.6 L17.2 21.5 L16.8 20.6 L15.3 20.8 L15.1 19.5 L16.5 19.2 L16.7 18.2 L15.5 17.4 L16.1 16.3 L17.4 17.0 L18.1 16.3 L17.7 15.0 L19.0 14.5 L19.5 15.8 L20.5 15.8 L21.0 14.5 L22.3 15.0 L21.9 16.3 L22.6 17.0 L23.9 16.3 L24.5 17.4 L23.3 18.2 Z" fill="url(#gs)" stroke="#6582a0" stroke-width=".7"/><path d="M19.2 10.3 L21.3 10.8 L21.0 13.2 L18.8 13.0 L18.2 14.6 L19.7 16.0 L18.3 17.9 L16.5 16.7 L15.1 17.8 L15.8 19.8 L13.5 20.7 L12.6 18.8 L10.9 19.0 L10.4 21.1 L8.0 20.8 L8.2 18.6 L6.6 18.0 L5.2 19.5 L3.3 18.1 L4.5 16.3 L3.4 14.9 L1.4 15.6 L0.5 13.3 L2.4 12.4 L2.2 10.7 L0.1 10.2 L0.4 7.8 L2.6 8.0 L3.2 6.4 L1.7 5.0 L3.1 3.1 L4.9 4.3 L6.3 3.2 L5.6 1.2 L7.9 0.3 L8.8 2.2 L10.5 2.0 L11.0 -0.1 L13.4 0.2 L13.2 2.4 L14.8 3.0 L16.2 1.5 L18.1 2.9 L16.9 4.7 L18.0 6.1 L20.0 5.4 L20.9 7.7 L19.0 8.6 Z M7.60 10.50 a3.10 3.10 0 1 0 6.20 0 a3.10 3.10 0 1 0 -6.20 0 Z" fill="url(#gg)" fill-rule="evenodd" stroke="#6886a4" stroke-width=".7"/></svg>
<svg class="a" style="left:522px;top:579.5px" width="26" height="26" viewBox="0 0 26 26"><path d="M23.5 19.2 L24.9 19.5 L24.7 20.8 L23.2 20.6 L22.8 21.5 L23.6 22.6 L22.6 23.4 L21.6 22.4 L20.7 22.7 L20.7 24.2 L19.3 24.2 L19.3 22.7 L18.4 22.4 L17.4 23.4 L16.4 22.6 L17.2 21.5 L16.8 20.6 L15.3 20.8 L15.1 19.5 L16.5 19.2 L16.7 18.2 L15.5 17.4 L16.1 16.3 L17.4 17.0 L18.1 16.3 L17.7 15.0 L19.0 14.5 L19.5 15.8 L20.5 15.8 L21.0 14.5 L22.3 15.0 L21.9 16.3 L22.6 17.0 L23.9 16.3 L24.5 17.4 L23.3 18.2 Z" fill="url(#gs)" stroke="#6582a0" stroke-width=".7"/><path d="M19.2 10.3 L21.3 10.8 L21.0 13.2 L18.8 13.0 L18.2 14.6 L19.7 16.0 L18.3 17.9 L16.5 16.7 L15.1 17.8 L15.8 19.8 L13.5 20.7 L12.6 18.8 L10.9 19.0 L10.4 21.1 L8.0 20.8 L8.2 18.6 L6.6 18.0 L5.2 19.5 L3.3 18.1 L4.5 16.3 L3.4 14.9 L1.4 15.6 L0.5 13.3 L2.4 12.4 L2.2 10.7 L0.1 10.2 L0.4 7.8 L2.6 8.0 L3.2 6.4 L1.7 5.0 L3.1 3.1 L4.9 4.3 L6.3 3.2 L5.6 1.2 L7.9 0.3 L8.8 2.2 L10.5 2.0 L11.0 -0.1 L13.4 0.2 L13.2 2.4 L14.8 3.0 L16.2 1.5 L18.1 2.9 L16.9 4.7 L18.0 6.1 L20.0 5.4 L20.9 7.7 L19.0 8.6 Z M7.60 10.50 a3.10 3.10 0 1 0 6.20 0 a3.10 3.10 0 1 0 -6.20 0 Z" fill="url(#gg)" fill-rule="evenodd" stroke="#6886a4" stroke-width=".7"/></svg>
<svg class="a" style="left:522px;top:608.0px" width="26" height="26" viewBox="0 0 26 26"><path d="M23.5 19.2 L24.9 19.5 L24.7 20.8 L23.2 20.6 L22.8 21.5 L23.6 22.6 L22.6 23.4 L21.6 22.4 L20.7 22.7 L20.7 24.2 L19.3 24.2 L19.3 22.7 L18.4 22.4 L17.4 23.4 L16.4 22.6 L17.2 21.5 L16.8 20.6 L15.3 20.8 L15.1 19.5 L16.5 19.2 L16.7 18.2 L15.5 17.4 L16.1 16.3 L17.4 17.0 L18.1 16.3 L17.7 15.0 L19.0 14.5 L19.5 15.8 L20.5 15.8 L21.0 14.5 L22.3 15.0 L21.9 16.3 L22.6 17.0 L23.9 16.3 L24.5 17.4 L23.3 18.2 Z" fill="url(#gs)" stroke="#6582a0" stroke-width=".7"/><path d="M19.2 10.3 L21.3 10.8 L21.0 13.2 L18.8 13.0 L18.2 14.6 L19.7 16.0 L18.3 17.9 L16.5 16.7 L15.1 17.8 L15.8 19.8 L13.5 20.7 L12.6 18.8 L10.9 19.0 L10.4 21.1 L8.0 20.8 L8.2 18.6 L6.6 18.0 L5.2 19.5 L3.3 18.1 L4.5 16.3 L3.4 14.9 L1.4 15.6 L0.5 13.3 L2.4 12.4 L2.2 10.7 L0.1 10.2 L0.4 7.8 L2.6 8.0 L3.2 6.4 L1.7 5.0 L3.1 3.1 L4.9 4.3 L6.3 3.2 L5.6 1.2 L7.9 0.3 L8.8 2.2 L10.5 2.0 L11.0 -0.1 L13.4 0.2 L13.2 2.4 L14.8 3.0 L16.2 1.5 L18.1 2.9 L16.9 4.7 L18.0 6.1 L20.0 5.4 L20.9 7.7 L19.0 8.6 Z M7.60 10.50 a3.10 3.10 0 1 0 6.20 0 a3.10 3.10 0 1 0 -6.20 0 Z" fill="url(#gg)" fill-rule="evenodd" stroke="#6886a4" stroke-width=".7"/></svg>
<svg class="a" style="left:522px;top:636.5px" width="26" height="26" viewBox="0 0 26 26"><path d="M23.5 19.2 L24.9 19.5 L24.7 20.8 L23.2 20.6 L22.8 21.5 L23.6 22.6 L22.6 23.4 L21.6 22.4 L20.7 22.7 L20.7 24.2 L19.3 24.2 L19.3 22.7 L18.4 22.4 L17.4 23.4 L16.4 22.6 L17.2 21.5 L16.8 20.6 L15.3 20.8 L15.1 19.5 L16.5 19.2 L16.7 18.2 L15.5 17.4 L16.1 16.3 L17.4 17.0 L18.1 16.3 L17.7 15.0 L19.0 14.5 L19.5 15.8 L20.5 15.8 L21.0 14.5 L22.3 15.0 L21.9 16.3 L22.6 17.0 L23.9 16.3 L24.5 17.4 L23.3 18.2 Z" fill="url(#gs)" stroke="#6582a0" stroke-width=".7"/><path d="M19.2 10.3 L21.3 10.8 L21.0 13.2 L18.8 13.0 L18.2 14.6 L19.7 16.0 L18.3 17.9 L16.5 16.7 L15.1 17.8 L15.8 19.8 L13.5 20.7 L12.6 18.8 L10.9 19.0 L10.4 21.1 L8.0 20.8 L8.2 18.6 L6.6 18.0 L5.2 19.5 L3.3 18.1 L4.5 16.3 L3.4 14.9 L1.4 15.6 L0.5 13.3 L2.4 12.4 L2.2 10.7 L0.1 10.2 L0.4 7.8 L2.6 8.0 L3.2 6.4 L1.7 5.0 L3.1 3.1 L4.9 4.3 L6.3 3.2 L5.6 1.2 L7.9 0.3 L8.8 2.2 L10.5 2.0 L11.0 -0.1 L13.4 0.2 L13.2 2.4 L14.8 3.0 L16.2 1.5 L18.1 2.9 L16.9 4.7 L18.0 6.1 L20.0 5.4 L20.9 7.7 L19.0 8.6 Z M7.60 10.50 a3.10 3.10 0 1 0 6.20 0 a3.10 3.10 0 1 0 -6.20 0 Z" fill="url(#gg)" fill-rule="evenodd" stroke="#6886a4" stroke-width=".7"/></svg>
<svg class="a" style="left:522px;top:665.0px" width="26" height="26" viewBox="0 0 26 26"><path d="M23.5 19.2 L24.9 19.5 L24.7 20.8 L23.2 20.6 L22.8 21.5 L23.6 22.6 L22.6 23.4 L21.6 22.4 L20.7 22.7 L20.7 24.2 L19.3 24.2 L19.3 22.7 L18.4 22.4 L17.4 23.4 L16.4 22.6 L17.2 21.5 L16.8 20.6 L15.3 20.8 L15.1 19.5 L16.5 19.2 L16.7 18.2 L15.5 17.4 L16.1 16.3 L17.4 17.0 L18.1 16.3 L17.7 15.0 L19.0 14.5 L19.5 15.8 L20.5 15.8 L21.0 14.5 L22.3 15.0 L21.9 16.3 L22.6 17.0 L23.9 16.3 L24.5 17.4 L23.3 18.2 Z" fill="url(#gs)" stroke="#6582a0" stroke-width=".7"/><path d="M19.2 10.3 L21.3 10.8 L21.0 13.2 L18.8 13.0 L18.2 14.6 L19.7 16.0 L18.3 17.9 L16.5 16.7 L15.1 17.8 L15.8 19.8 L13.5 20.7 L12.6 18.8 L10.9 19.0 L10.4 21.1 L8.0 20.8 L8.2 18.6 L6.6 18.0 L5.2 19.5 L3.3 18.1 L4.5 16.3 L3.4 14.9 L1.4 15.6 L0.5 13.3 L2.4 12.4 L2.2 10.7 L0.1 10.2 L0.4 7.8 L2.6 8.0 L3.2 6.4 L1.7 5.0 L3.1 3.1 L4.9 4.3 L6.3 3.2 L5.6 1.2 L7.9 0.3 L8.8 2.2 L10.5 2.0 L11.0 -0.1 L13.4 0.2 L13.2 2.4 L14.8 3.0 L16.2 1.5 L18.1 2.9 L16.9 4.7 L18.0 6.1 L20.0 5.4 L20.9 7.7 L19.0 8.6 Z M7.60 10.50 a3.10 3.10 0 1 0 6.20 0 a3.10 3.10 0 1 0 -6.20 0 Z" fill="url(#gg)" fill-rule="evenodd" stroke="#6886a4" stroke-width=".7"/></svg>
<svg class="a" style="left:522px;top:693.5px" width="26" height="26" viewBox="0 0 26 26"><path d="M23.5 19.2 L24.9 19.5 L24.7 20.8 L23.2 20.6 L22.8 21.5 L23.6 22.6 L22.6 23.4 L21.6 22.4 L20.7 22.7 L20.7 24.2 L19.3 24.2 L19.3 22.7 L18.4 22.4 L17.4 23.4 L16.4 22.6 L17.2 21.5 L16.8 20.6 L15.3 20.8 L15.1 19.5 L16.5 19.2 L16.7 18.2 L15.5 17.4 L16.1 16.3 L17.4 17.0 L18.1 16.3 L17.7 15.0 L19.0 14.5 L19.5 15.8 L20.5 15.8 L21.0 14.5 L22.3 15.0 L21.9 16.3 L22.6 17.0 L23.9 16.3 L24.5 17.4 L23.3 18.2 Z" fill="url(#gs)" stroke="#6582a0" stroke-width=".7"/><path d="M19.2 10.3 L21.3 10.8 L21.0 13.2 L18.8 13.0 L18.2 14.6 L19.7 16.0 L18.3 17.9 L16.5 16.7 L15.1 17.8 L15.8 19.8 L13.5 20.7 L12.6 18.8 L10.9 19.0 L10.4 21.1 L8.0 20.8 L8.2 18.6 L6.6 18.0 L5.2 19.5 L3.3 18.1 L4.5 16.3 L3.4 14.9 L1.4 15.6 L0.5 13.3 L2.4 12.4 L2.2 10.7 L0.1 10.2 L0.4 7.8 L2.6 8.0 L3.2 6.4 L1.7 5.0 L3.1 3.1 L4.9 4.3 L6.3 3.2 L5.6 1.2 L7.9 0.3 L8.8 2.2 L10.5 2.0 L11.0 -0.1 L13.4 0.2 L13.2 2.4 L14.8 3.0 L16.2 1.5 L18.1 2.9 L16.9 4.7 L18.0 6.1 L20.0 5.4 L20.9 7.7 L19.0 8.6 Z M7.60 10.50 a3.10 3.10 0 1 0 6.20 0 a3.10 3.10 0 1 0 -6.20 0 Z" fill="url(#gg)" fill-rule="evenodd" stroke="#6886a4" stroke-width=".7"/></svg>
<svg class="a" style="left:14px;top:10.8px" width="26" height="26" viewBox="0 0 26 26"><g opacity=".9"><path d="M23.5 19.2 L24.9 19.5 L24.7 20.8 L23.2 20.6 L22.8 21.5 L23.6 22.6 L22.6 23.4 L21.6 22.4 L20.7 22.7 L20.7 24.2 L19.3 24.2 L19.3 22.7 L18.4 22.4 L17.4 23.4 L16.4 22.6 L17.2 21.5 L16.8 20.6 L15.3 20.8 L15.1 19.5 L16.5 19.2 L16.7 18.2 L15.5 17.4 L16.1 16.3 L17.4 17.0 L18.1 16.3 L17.7 15.0 L19.0 14.5 L19.5 15.8 L20.5 15.8 L21.0 14.5 L22.3 15.0 L21.9 16.3 L22.6 17.0 L23.9 16.3 L24.5 17.4 L23.3 18.2 Z" fill="url(#gs)" stroke="#6582a0" stroke-width=".7"/><path d="M19.2 10.3 L21.3 10.8 L21.0 13.2 L18.8 13.0 L18.2 14.6 L19.7 16.0 L18.3 17.9 L16.5 16.7 L15.1 17.8 L15.8 19.8 L13.5 20.7 L12.6 18.8 L10.9 19.0 L10.4 21.1 L8.0 20.8 L8.2 18.6 L6.6 18.0 L5.2 19.5 L3.3 18.1 L4.5 16.3 L3.4 14.9 L1.4 15.6 L0.5 13.3 L2.4 12.4 L2.2 10.7 L0.1 10.2 L0.4 7.8 L2.6 8.0 L3.2 6.4 L1.7 5.0 L3.1 3.1 L4.9 4.3 L6.3 3.2 L5.6 1.2 L7.9 0.3 L8.8 2.2 L10.5 2.0 L11.0 -0.1 L13.4 0.2 L13.2 2.4 L14.8 3.0 L16.2 1.5 L18.1 2.9 L16.9 4.7 L18.0 6.1 L20.0 5.4 L20.9 7.7 L19.0 8.6 Z M7.60 10.50 a3.10 3.10 0 1 0 6.20 0 a3.10 3.10 0 1 0 -6.20 0 Z" fill="url(#gg)" fill-rule="evenodd" stroke="#6886a4" stroke-width=".7"/></g></svg>
<svg class="a" style="left:15.5px;top:135.3px" width="26" height="26" viewBox="0 0 26 26"><g opacity=".85"><path d="M23.5 19.2 L24.9 19.5 L24.7 20.8 L23.2 20.6 L22.8 21.5 L23.6 22.6 L22.6 23.4 L21.6 22.4 L20.7 22.7 L20.7 24.2 L19.3 24.2 L19.3 22.7 L18.4 22.4 L17.4 23.4 L16.4 22.6 L17.2 21.5 L16.8 20.6 L15.3 20.8 L15.1 19.5 L16.5 19.2 L16.7 18.2 L15.5 17.4 L16.1 16.3 L17.4 17.0 L18.1 16.3 L17.7 15.0 L19.0 14.5 L19.5 15.8 L20.5 15.8 L21.0 14.5 L22.3 15.0 L21.9 16.3 L22.6 17.0 L23.9 16.3 L24.5 17.4 L23.3 18.2 Z" fill="url(#gs)" stroke="#6582a0" stroke-width=".7"/><path d="M19.2 10.3 L21.3 10.8 L21.0 13.2 L18.8 13.0 L18.2 14.6 L19.7 16.0 L18.3 17.9 L16.5 16.7 L15.1 17.8 L15.8 19.8 L13.5 20.7 L12.6 18.8 L10.9 19.0 L10.4 21.1 L8.0 20.8 L8.2 18.6 L6.6 18.0 L5.2 19.5 L3.3 18.1 L4.5 16.3 L3.4 14.9 L1.4 15.6 L0.5 13.3 L2.4 12.4 L2.2 10.7 L0.1 10.2 L0.4 7.8 L2.6 8.0 L3.2 6.4 L1.7 5.0 L3.1 3.1 L4.9 4.3 L6.3 3.2 L5.6 1.2 L7.9 0.3 L8.8 2.2 L10.5 2.0 L11.0 -0.1 L13.4 0.2 L13.2 2.4 L14.8 3.0 L16.2 1.5 L18.1 2.9 L16.9 4.7 L18.0 6.1 L20.0 5.4 L20.9 7.7 L19.0 8.6 Z M7.60 10.50 a3.10 3.10 0 1 0 6.20 0 a3.10 3.10 0 1 0 -6.20 0 Z" fill="url(#gg)" fill-rule="evenodd" stroke="#6886a4" stroke-width=".7"/></g></svg>
<svg class="a" style="left:0;top:80px" width="480" height="40" viewBox="0 80 480 40">
<defs>
<linearGradient id="ag" x1="0" y1="0" x2="0" y2="1"><stop offset="0" stop-color="#a6a6a6"/><stop offset=".5" stop-color="#7c7c7c"/><stop offset="1" stop-color="#9a9a9a"/></linearGradient>
<linearGradient id="hg" x1="0" y1="0" x2="1" y2="0"><stop offset="0" stop-color="#1f3cab"/><stop offset=".22" stop-color="#2a49bd"/><stop offset=".24" stop-color="#5672dc"/><stop offset="1" stop-color="#4763d2"/></linearGradient>
<linearGradient id="grn" x1="0" y1="0" x2="1" y2="1"><stop offset="0" stop-color="#6fe255"/><stop offset="1" stop-color="#2f9a22"/></linearGradient>
</defs>
<!-- back / forward -->
<path d="M9.6 100.2 L20.8 89.4 L20.8 95 L32 95 Q33.2 95 33.2 96.2 L33.2 104 Q33.2 105.2 32 105.2 L20.8 105.2 L20.8 111.2 Z" fill="url(#ag)" stroke="#747474" stroke-width="1.1" stroke-linejoin="round"/>
<path d="M68 100.2 L56.6 89.4 L56.6 95 L45.4 95 Q44.2 95 44.2 96.2 L44.2 104 Q44.2 105.2 45.4 105.2 L56.6 105.2 L56.6 111.2 Z" fill="url(#ag)" stroke="#747474" stroke-width="1.1" stroke-linejoin="round"/>
<!-- separators -->
<g stroke="#c6c6c6" stroke-width="1.1"><path d="M75.6 84 V115"/><path d="M122.6 84 V115"/><path d="M237.4 84 V115"/><path d="M318.7 84 V115"/></g>
<!-- highlighted button -->
<rect x="86.3" y="83.3" width="33.8" height="31.4" fill="#cce4f9"/>
<!-- console tree icon -->
<g>
<rect x="92.5" y="92.5" width="23" height="18.6" fill="#fafafa" stroke="#7e7e7e" stroke-width="1.1"/>
<rect x="93" y="93" width="22" height="3.4" fill="#8d8d8d"/>
<rect x="109.3" y="93.6" width="1.8" height="1.6" fill="#d8d8d8"/><rect x="112.3" y="93.6" width="1.8" height="1.6" fill="#d8d8d8"/>
<rect x="93" y="96.8" width="22" height="1.6" fill="#c9c9c9"/>
<rect x="101.6" y="98.4" width="1.3" height="12.5" fill="#8a8a8a"/>
<rect x="94.8" y="100.3" width="4.8" height="1.8" fill="#5c7ea3"/><rect x="94.8" y="103.8" width="4.8" height="1.8" fill="#5c7ea3"/><rect x="94.8" y="107.2" width="4.8" height="1.8" fill="#5c7ea3"/>
<path d="M104.2 104.7 L110.2 100 L110.2 109.4 Z" fill="#4fae3a"/>
<rect x="111.6" y="99.6" width="2.4" height="10.4" fill="#efefef"/>
</g>
<!-- properties icon -->
<g>
<rect x="137.7" y="88.2" width="21.4" height="22.6" rx="2.2" fill="#fff" stroke="#6d6d6d" stroke-width="1.4"/>
<path d="M140 90.3 H155.5 M140 92.6 H153" stroke="#b9b9b9" stroke-width="1"/>
<path d="M156 88.8 L158.4 91.4" stroke="#555" stroke-width="1.2"/>
<rect x="140.6" y="94.2" width="15.2" height="12.2" fill="#fff" stroke="#9b9ba3" stroke-width="1"/>
<path d="M142.4 96.4 V99.6 H154" fill="none" stroke="#9fc3e6" stroke-width="1.1"/>
<path d="M146 100.2 H153.3" stroke="#6aa78a" stroke-width="1.2"/><path d="M146 103 H153.3" stroke="#6aa78a" stroke-width="1.2"/>
<path d="M146 97.6 H152.5" stroke="#d99" stroke-width="1"/>
<rect x="143.3" y="99.7" width="1.2" height="1.2" fill="#5a7fb0"/><rect x="143.3" y="102.5" width="1.2" height="1.2" fill="#5a7fb0"/>
<rect x="145.8" y="107.6" width="6.2" height="2.9" fill="#2ec4b6"/>
</g>
<!-- refresh icon -->
<g>
<path d="M175.4 88.6 H188.4 L193.3 93.6 V111 H175.4 Z" fill="#fff" stroke="#8a8a8a" stroke-width="1.1" stroke-linejoin="round"/>
<path d="M188.4 88.6 V93.6 H193.3" fill="#eee" stroke="#9a9a9a" stroke-width=".9"/>
<path d="M189.9 99.2 A5.4 5.4 0 1 0 188.4 104.3" fill="none" stroke="#43ad30" stroke-width="3.5"/>
<path d="M186.2 100.6 L192.9 99.4 L191.8 106.4 Z" fill="#2c9420"/>
</g>
<!-- export list icon -->
<g>
<path d="M206.9 88.6 H219.6 L224.5 93.6 V111 H206.9 Z" fill="#fbf6e2" stroke="#8f8f8f" stroke-width="1.1" stroke-linejoin="round"/>
<path d="M219.6 88.6 V93.6 H224.5" fill="#eee9d2" stroke="#9a9a9a" stroke-width=".9"/>
<circle cx="211.3" cy="97.3" r="1" fill="#333"/><circle cx="211.3" cy="101.6" r="1" fill="#333"/><circle cx="211.3" cy="106" r="1" fill="#333"/>
<path d="M213.8 97.3 H221 M213.8 101.6 H217 M213.8 106 H217.5" stroke="#777" stroke-width="1.3"/>
<path d="M216.6 101.2 H222.6 V98.4 L229.8 103.3 L222.6 108 V105.4 H216.6 Z" fill="url(#grn)"/>
</g>
<!-- help icon -->
<g>
<rect x="254.2" y="87.7" width="18.9" height="23.8" fill="url(#hg)"/>
<rect x="254.2" y="87.7" width="18.9" height="23.8" fill="none" stroke="#2238a0" stroke-width=".8"/>
<path d="M261.3 95.2 Q261.2 91.3 264.8 91.3 Q268.4 91.3 268.4 94.8 Q268.4 97 266.4 98.6 Q264.6 100.2 264.6 103.6" fill="none" stroke="#f4f6ff" stroke-width="2.5"/>
<circle cx="264.6" cy="107" r="1.5" fill="#f4f6ff"/>
</g>
<!-- action pane icon -->
<g>
<rect x="287.6" y="92.5" width="23" height="18.8" fill="#fafafa" stroke="#7e7e7e" stroke-width="1.1"/>
<rect x="288" y="93" width="22.2" height="3.4" fill="#8d8d8d"/>
<rect x="304.6" y="93.6" width="1.8" height="1.6" fill="#d8d8d8"/><rect x="307.6" y="93.6" width="1.8" height="1.6" fill="#d8d8d8"/>
<rect x="288" y="96.8" width="22.2" height="1.6" fill="#c9c9c9"/>
<rect x="301.8" y="98.4" width="1.3" height="12.5" fill="#8a8a8a"/>
<rect x="304.7" y="100.3" width="4" height="1.8" fill="#6c7f96"/><rect x="304.7" y="103.6" width="4" height="1.8" fill="#6c7f96"/><rect x="304.7" y="106.9" width="4" height="1.8" fill="#6c7f96"/>
<path d="M298.6 104.7 L293.2 100.2 L293.2 109.2 Z" fill="#5aa83d"/>
</g>
<!-- play / stop / pause / resume -->
<path d="M342.9 92.4 L351.9 99.4 L342.9 106.4 Z" fill="#b4b4b4" stroke="#8a8a8a" stroke-width="1" stroke-linejoin="round"/>
<rect x="372.8" y="92.1" width="14.4" height="14.5" rx="2.4" fill="#474747" stroke="#3a3a3a" stroke-width=".6"/>
<rect x="408.6" y="92.1" width="4.3" height="14.5" rx=".8" fill="#7e7e7e" stroke="#6a6a6a" stroke-width=".6"/><rect x="416.1" y="92.1" width="4.3" height="14.5" rx=".8" fill="#7e7e7e" stroke="#6a6a6a" stroke-width=".6"/>
<rect x="441.5" y="92.1" width="4.3" height="14.5" rx=".8" fill="#6f6f6f" stroke="#5d5d5d" stroke-width=".6"/>
<path d="M449 91.8 L458.2 99.3 L449 106.8 Z" fill="#46c22f" stroke="#3bb027" stroke-width=".6" stroke-linejoin="round"/>
</svg>

<!-- bottom of right panel + tab strip -->
<div class="a" style="left:195.5px;top:712.6px;width:1134px;height:1.5px;background:#3a3a3a"></div>
<div class="a" style="left:195.5px;top:714.1px;width:1135.5px;height:2px;background:#fff"></div>
<div class="a" style="left:191.3px;top:716px;width:1139.7px;height:28px;background:#f0f0f0"></div>
<div class="a" style="left:296px;top:716px;width:1035px;height:1px;background:#7a7a7a"></div>
<svg class="a" style="left:190px;top:710px" width="210" height="36" viewBox="190 710 210 36">
  <path d="M292 729 L298.8 742.7 L375.9 742.7 L386.3 716.4 L296.4 716.4 Z" fill="#f0f0f0" stroke="#7a7a7a" stroke-width="1.1"/>
  <path d="M196.4 714.3 L207.5 742.7 L286.2 742.7 L296.6 716.2 L296.6 714.3 Z" fill="#fff"/>
  <path d="M196.4 714.3 L207.5 742.7 L286.2 742.7 L296.6 716.2" fill="none" stroke="#7a7a7a" stroke-width="1.1"/>
</svg>
<!-- status bar -->
<div class="a" style="left:8px;top:744.4px;width:1323px;height:34.4px;background:#f0f0f0"></div>
<div class="a" style="left:8px;top:744.2px;width:1323px;height:1px;background:#f8f8f8"></div>
<div class="a" style="left:1000px;top:746px;width:1px;height:32px;background:#e2e2e2"></div>
<div class="a" style="left:8px;top:743.3px;width:183.5px;height:1.3px;background:#8a8a8a"></div>
<span class="t" style='left:210.50px;top:719.20px;font-size:17px;line-height:23px;letter-spacing:-0.069px;'>Extended</span>
<span class="t" style='left:302.70px;top:719.20px;font-size:17px;line-height:23px;letter-spacing:0.037px;'>Standard</span>
<!-- context menu -->
<div class="a" style="left:650px;top:327.3px;width:224.6px;height:356.6px;background:#f9f9f9;border-radius:10px;box-shadow:0 7px 14px rgba(0,0,0,.17),0 0 0 1px rgba(0,0,0,.06)"></div>
<div class="a" style="left:709px;top:501px;width:154px;height:1px;background:#dcdcdc"></div>
<div class="a" style="left:709px;top:547.3px;width:154px;height:1px;background:#dcdcdc"></div>
<div class="a" style="left:709px;top:594px;width:154px;height:1px;background:#dcdcdc"></div>
<div class="a" style="left:709px;top:640.3px;width:154px;height:1px;background:#dcdcdc"></div>
<svg class="a" style="left:844px;top:519px" width="12" height="14" viewBox="0 0 12 14"><path d="M4 3 L8.2 7 L4 11" fill="none" stroke="#555" stroke-width="1.1"/></svg>
<span class="t" style='left:706.80px;top:338.30px;font-size:17px;line-height:23px;letter-spacing:-0.244px;color:#a3a3a3;'>Start</span>
<span class="t" style='left:706.80px;top:371.40px;font-size:17px;line-height:23px;letter-spacing:0.061px;'>Stop</span>
<span class="t" style='left:705.80px;top:404.30px;font-size:17px;line-height:23px;letter-spacing:-0.537px;color:#a3a3a3;'>Pause</span>
<span class="t" style='left:705.80px;top:437.30px;font-size:17px;line-height:23px;letter-spacing:-0.149px;color:#a3a3a3;'>Resume</span>
<span class="t" style='left:705.80px;top:470.00px;font-size:17px;line-height:23px;letter-spacing:-0.095px;'>Restart</span>
<span class="t" style='left:706.80px;top:516.60px;font-size:17px;line-height:23px;letter-spacing:-0.384px;'>All Tasks</span>
<span class="t" style='left:705.80px;top:563.30px;font-size:17px;line-height:23px;letter-spacing:-0.212px;'>Refresh</span>
<span class="t" style='left:705.80px;top:609.40px;font-size:17px;line-height:23px;letter-spacing:-0.048px;font-weight:700;'>Properties</span>
<span class="t" style='left:705.80px;top:656.00px;font-size:17px;line-height:23px;letter-spacing:0.464px;'>Help</span>
<svg class="a" style="left:390px;top:320px" width="580" height="370" viewBox="390 320 580 370">
<path d="M431.1 424.5 L503.9 348.7 L504.4 356.9 L514.9 335.0 L493.2 346.0 L501.4 346.3 L427.3 420.7 Z" fill="#ea3b38"/>
<circle cx="429.2" cy="422.6" r="25.5" fill="#ea3b38"/>
<path d="M421.6 411.2 Q426.6 410.2 429.3 406.7 L433.9 406.7 L433.9 433.2 L427.6 433.2 L427.6 413.6 Q425 415 421.6 415.7 Z" fill="#fff"/>
<path d="M925.7 644.8 L815.8 623.2 L822.4 618.4 L798.3 621.4 L819.3 633.7 L815.1 626.6 L924.7 650.0 Z" fill="#ea3b38"/>
<circle cx="925.2" cy="647.4" r="25.4" fill="#ea3b38"/>
</svg>
<span class="t" style='left:913.80px;top:624.40px;font-size:37px;line-height:43px;font-weight:700;color:#fff;'>2</span>
<div class="a" style="left:1191px;top:743.3px;width:147px;height:43px;background:#fff"></div>
<svg class="a" style="left:1188px;top:742px" width="150" height="44" viewBox="1188 742 150 44">
<ellipse cx="1222.2" cy="763.7" rx="18.8" ry="16.2" fill="#2c3ea0"/>
<path d="M1200 756.5 L1203.4 759.2 L1214.4 770.9 L1222 781.8 L1200 783 Z" fill="#fff"/>
<path d="M1213.6 754.9 L1232.6 754.9 L1221.2 772 L1229.3 772 L1229.9 767.6 L1231.2 767.6 L1231 777.6 L1224 777.2 L1219.5 775.6 L1212.6 771.8 L1224.6 759.7 L1217.2 759.7 L1216 762.7 L1212.8 762.7 Z" fill="#fff"/>
<path d="M1204.4 751.4 C1199 750.6 1196 753 1197.2 757 C1199 763 1206 768.5 1211.6 773.6 C1215 778 1221 780.4 1228 781.8 C1236 783.6 1246 783.6 1248.4 778 C1249.4 774.5 1247.4 771.4 1244.7 768.8 C1248.2 772.6 1248.6 776.5 1246.8 778.8 C1243 782.8 1234 783.8 1225 783.4 C1216 783.6 1208.5 781.5 1204.6 775 C1202.6 771.4 1202.6 769.4 1200.4 766.4 C1196 761.4 1191.2 756 1192.6 751.4 C1194.2 747.4 1199.6 746.6 1203.6 747.4 Z" fill="#b01217"/>
<circle cx="1204.6" cy="748.4" r="3.3" fill="#b01217"/>
<g fill="none" stroke="#1f4c9c" stroke-linecap="butt" stroke-linejoin="miter"><path d="M1257.3 748.3 L1258.5 750.6" stroke-width="2.8"/><path d="M1253.8 752.0 L1263.6 752.0" stroke-width="1.6"/><path d="M1260.9 752.4 L1254.6 760.2" stroke-width="2.0"/><path d="M1255.9 753.2 L1263.1 760.2" stroke-width="2.2"/><path d="M1249.6 749.8 L1251.3 751.6" stroke-width="2.8"/><path d="M1248.7 754.6 L1251.9 754.6" stroke-width="1.6"/><path d="M1251.7 754.6 L1251.7 759.8" stroke-width="2.8"/><path d="M1248.6 762.6 L1251.7 759.8 L1255.8 762.6 L1264.3 762.6" stroke-width="2.2"/><path d="M1268.1 749.4 L1278.1 749.4" stroke-width="1.6"/><path d="M1268.5 749.0 L1268.5 756.6" stroke-width="2.8"/><path d="M1277.7 749.0 L1277.7 756.6" stroke-width="2.8"/><path d="M1268.1 753.0 L1278.1 753.0" stroke-width="1.6"/><path d="M1268.1 756.4 L1278.1 756.4" stroke-width="1.6"/><path d="M1273.1 749.4 L1273.1 763.0" stroke-width="2.8"/><path d="M1268.4 759.6 L1277.9 759.6" stroke-width="1.6"/><path d="M1265.5 763.0 L1280.7 763.0" stroke-width="1.6"/><path d="M1283.0 751.0 L1290.0 751.0" stroke-width="1.6"/><path d="M1286.4 748.4 L1286.4 753.8" stroke-width="2.8"/><path d="M1282.3 754.0 L1291.0 754.0" stroke-width="1.6"/><path d="M1290.0 749.0 L1283.2 757.8" stroke-width="1.8"/><path d="M1284.6 757.0 L1289.4 757.0 L1287.0 759.0" stroke-width="1.6"/><path d="M1282.3 760.2 L1291.0 760.2" stroke-width="1.6"/><path d="M1287.0 758.8 L1287.0 763.2 L1285.4 762.8" stroke-width="2.8"/><path d="M1293.8 748.3 L1291.6 753.8" stroke-width="2.1"/><path d="M1293.0 751.6 L1297.7 751.6" stroke-width="1.6"/><path d="M1296.2 752.0 L1294.2 758.5 L1290.6 763.6" stroke-width="2.2"/><path d="M1292.4 754.6 L1297.8 763.4" stroke-width="2.3"/><path d="M1305.2 748.8 L1300.0 750.4" stroke-width="1.8"/><path d="M1299.1 753.2 L1306.4 753.2" stroke-width="1.6"/><path d="M1302.8 750.2 L1302.8 763.6" stroke-width="2.8"/><path d="M1302.8 753.8 L1299.2 759.2" stroke-width="1.8"/><path d="M1303.4 754.8 L1305.8 757.6" stroke-width="1.8"/><path d="M1307.8 749.4 L1314.0 749.4" stroke-width="1.6"/><path d="M1308.2 749.0 L1308.2 754.4" stroke-width="2.8"/><path d="M1313.6 749.0 L1313.6 754.4" stroke-width="2.8"/><path d="M1307.8 754.0 L1314.0 754.0" stroke-width="1.6"/><path d="M1307.4 756.8 L1314.4 756.8" stroke-width="1.6"/><path d="M1308.4 759.8 L1313.4 759.8" stroke-width="1.6"/><path d="M1306.8 763.1 L1314.8 763.1" stroke-width="1.6"/><path d="M1310.9 756.8 L1310.9 763.0" stroke-width="2.8"/><path d="M1317.3 749.0 L1317.3 763.8" stroke-width="2.8"/><path d="M1317.3 749.6 L1330.3 749.6" stroke-width="1.6"/><path d="M1330.2 749.4 L1330.2 762.8 L1328.3 763.0" stroke-width="2.8"/><path d="M1319.3 752.0 L1322.9 759.4" stroke-width="1.7"/><path d="M1322.9 751.8 L1319.1 760.0" stroke-width="1.7"/><path d="M1324.5 752.0 L1328.3 759.4" stroke-width="1.7"/><path d="M1328.3 751.8 L1324.3 760.0" stroke-width="1.7"/></g>
</svg>
<span class="t" style='left:1256.40px;top:764.10px;font-size:12px;line-height:18px;letter-spacing:0.020px;font-weight:700;color:#1f4c9c;font-family:"Liberation Serif", serif;'>herecours.com</span>
</body></html>
